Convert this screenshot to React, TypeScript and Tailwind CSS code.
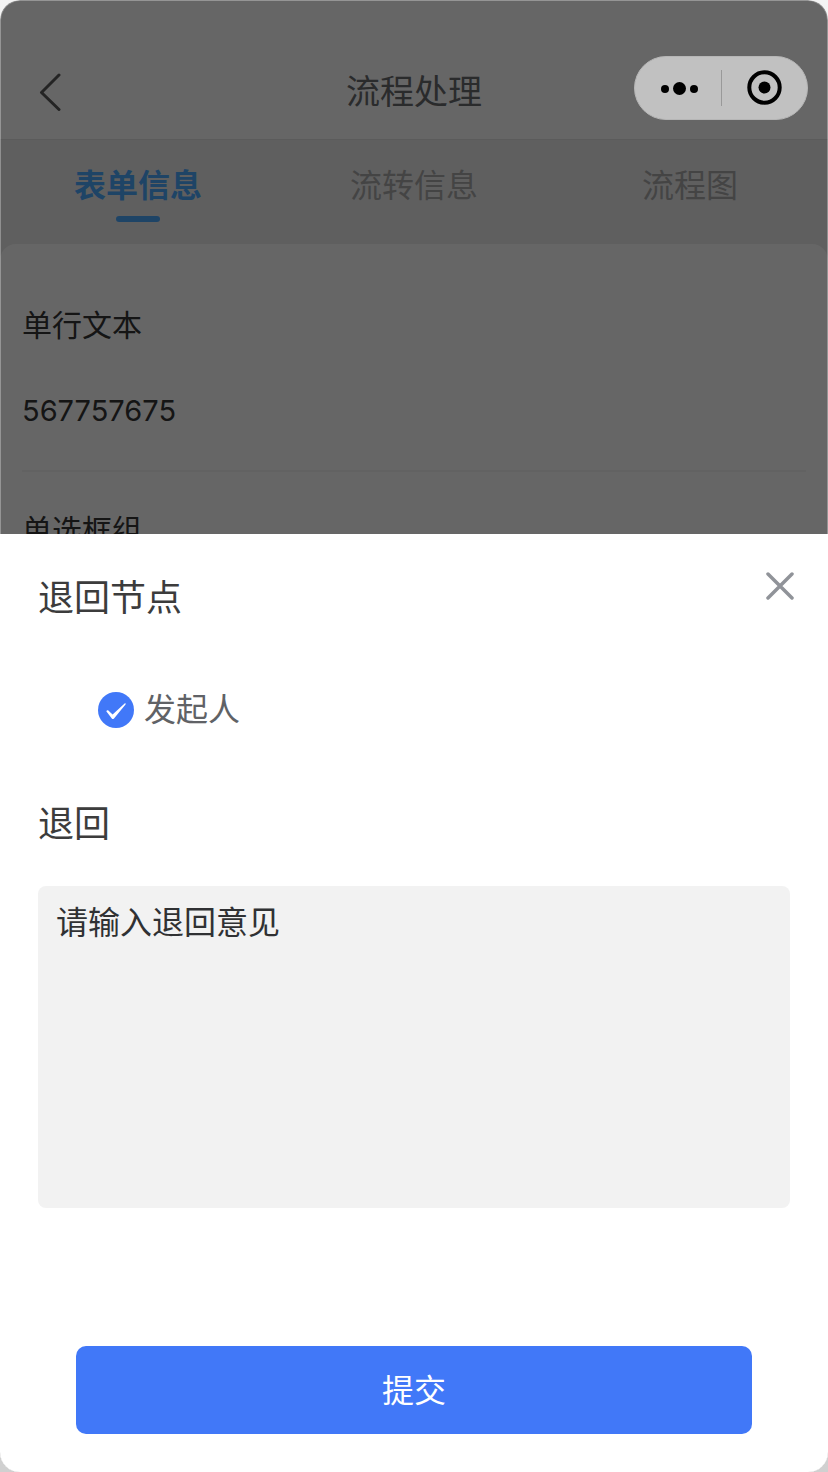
import { useState } from "react";

const tabs = ["表单信息", "流转信息", "流程图"];

function NavBar() {
  return (
    <header className="relative flex h-[139px] items-end justify-center pb-[23px]">
      <button type="button" aria-label="返回" className="absolute bottom-7 left-[38px] text-[#5a5a5a]">
        <svg className="h-[38px] w-6" viewBox="0 0 24 38" fill="none" stroke="currentColor" strokeWidth="3" strokeLinecap="round" strokeLinejoin="round">
          <path d="M21 2 3.500 19.500 21 36.500" />
        </svg>
      </button>
      <h1 className="text-[34px] leading-[48px] text-[#6a6b6e]">流程处理</h1>
    </header>
  );
}

function TabBar({ active, onChange }: { active: number; onChange: (i: number) => void }) {
  return (
    <nav className="grid h-[105px] grid-cols-3 border-t border-[#e3e3e3] pt-[22px]">
      {tabs.map((tab, i) => (
        <button
          key={tab}
          type="button"
          onClick={() => onChange(i)}
          className={`flex flex-col items-center text-[32px] leading-[48px] ${
            active === i ? "font-bold text-[#4daaff]" : "text-[#aaaaaa]"
          }`}
        >
          {tab}
          {active === i && <span className="mt-1.5 h-1.5 w-11 rounded-full bg-[#4daaff]" />}
        </button>
      ))}
    </nav>
  );
}

function FormDetail() {
  return (
    <section className="grow rounded-t-2xl bg-white px-[22px] pt-[59px] text-[30px] leading-[44px] text-[#353535]">
      <dl>
        <div className="border-b-2 border-[#f4f4f4] pb-[37px]">
          <dt>单行文本</dt>
          <dd className="mt-[42px] text-[29px]">567757675</dd>
        </div>
        <div className="pt-9">
          <dt>单选框组</dt>
        </div>
      </dl>
    </section>
  );
}

// Mini-program menu in the top right corner, stays above the mask
function Capsule() {
  return (
    <div className="absolute top-14 right-5 flex h-16 w-[174px] items-center rounded-full border border-[#b6b6b6] bg-[#c1c1c1] text-black">
      <button type="button" aria-label="更多" className="flex flex-1 justify-center">
        <svg className="h-4 w-10" viewBox="0 0 40 16" fill="currentColor">
          <circle cx="7" cy="9" r="4" />
          <circle cx="21.500" cy="8.500" r="6.500" />
          <circle cx="36" cy="9" r="4" />
        </svg>
      </button>
      <span className="h-9 w-px bg-[#999999]" />
      <button type="button" aria-label="关闭小程序" className="flex flex-1 justify-center">
        <svg className="size-9" viewBox="0 0 36 36">
          <circle cx="18.500" cy="17.500" r="15.200" fill="none" stroke="currentColor" strokeWidth="4" />
          <circle cx="18.500" cy="17.500" r="6" fill="currentColor" />
        </svg>
      </button>
    </div>
  );
}

function ReturnSheet() {
  const [opinion, setOpinion] = useState("");

  return (
    <form
      role="dialog"
      aria-labelledby="sheet-title"
      onSubmit={(e) => e.preventDefault()}
      className="absolute inset-x-0 bottom-0 flex flex-col bg-white px-[38px] pt-[38px] pb-[38px] text-[#3c3c3c]"
    >
      <div className="flex items-start justify-between">
        <h2 id="sheet-title" className="text-4xl leading-[52px]">退回节点</h2>
        <button type="button" aria-label="关闭" className="-mr-1 text-[#909399]">
          <svg className="size-7" viewBox="0 0 28 28" fill="none" stroke="currentColor" strokeWidth="3.5" strokeLinecap="round">
            <path d="M2 2 26 26M26 2 2 26" />
          </svg>
        </button>
      </div>

      <label className="mt-[62px] ml-[60px] flex items-center gap-2.5 self-start text-[32px] leading-[48px] text-[#606266]">
        <input type="radio" name="node" defaultChecked className="sr-only" />
        <svg className="size-9" viewBox="0 0 36 36">
          <circle cx="18" cy="18" r="18" fill="#4178f8" />
          <path d="M8.300 19.300c.4-1.200 1.500-1.400 2.300-.6l4 3.800L26.600 11.400c.8-.6 1.500.2.9 1L16 26.500c-.8.8-1.600.8-2.200 0z" fill="#fff" />
        </svg>
        发起人
      </label>

      <label htmlFor="opinion" className="mt-16 text-4xl leading-[52px]">退回</label>
      <textarea
        id="opinion"
        value={opinion}
        onChange={(e) => setOpinion(e.target.value)}
        placeholder="请输入退回意见"
        className="mt-9 h-[322px] w-full resize-none rounded-lg bg-[#f2f2f2] px-[18px] py-[13px] text-[32px] leading-[48px] outline-none placeholder:text-[#303133]"
      />

      <button type="submit" className="mx-[38px] mt-[138px] h-[88px] rounded-[10px] bg-[#4178f8] pt-0.5 text-[32px] text-white">
        提交
      </button>
    </form>
  );
}

export default function App() {
  const [active, setActive] = useState(0);

  return (
    <div className="bg-linear-to-b from-[#f4f4f4] to-[#d0d0d0] font-[Inter,'Noto_Sans_CJK_SC',sans-serif]">
      <div className="relative flex min-h-screen flex-col overflow-hidden rounded-[20px] bg-white">
        <NavBar />
        <div className="flex grow flex-col bg-[#eeeeee]">
          <TabBar active={active} onChange={setActive} />
          <FormDetail />
        </div>
        <div className="absolute inset-0 rounded-[20px] border border-white/30 bg-black/60" />
        <Capsule />
        <ReturnSheet />
      </div>
    </div>
  );
}
